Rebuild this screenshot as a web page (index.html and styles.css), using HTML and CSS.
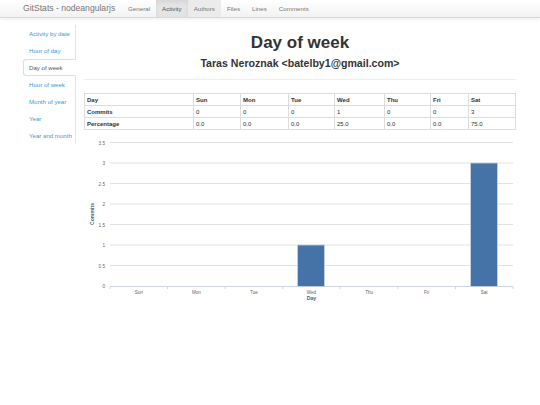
FILE: index.html
```html
<!DOCTYPE html>
<html>
<head>
<meta charset="utf-8">
<link rel="stylesheet" href="styles.css">
</head>
<body>
<div class="navbar">
  <span class="brand">GitStats - nodeangularjs</span>
  <ul class="nav">
    <li>General</li>
    <li class="active">Activity</li>
    <li class="shaded">Authors</li>
    <li>Files</li>
    <li>Lines</li>
    <li>Comments</li>
  </ul>
</div>
<div class="page">
  <ul class="side">
    <li>Activity by date</li>
    <li>Hour of day</li>
    <li class="current">Day of week</li>
    <li>Hour of week</li>
    <li>Month of year</li>
    <li>Year</li>
    <li>Year and month</li>
  </ul>
  <div class="main">
    <h1>Day of week</h1>
    <h2>Taras Neroznak &lt;batelby1@gmail.com&gt;</h2>
    <hr>
    <table class="stats">
      <tr class="head"><td class="c0">Day</td><td class="c1">Sun</td><td class="c2">Mon</td><td class="c3">Tue</td><td class="c4">Wed</td><td class="c5">Thu</td><td class="c6">Fri</td><td>Sat</td></tr>
      <tr><td class="lbl">Commits</td><td>0</td><td>0</td><td>0</td><td>1</td><td>0</td><td>0</td><td>3</td></tr>
      <tr><td class="lbl">Percentage</td><td>0.0</td><td>0.0</td><td>0.0</td><td>25.0</td><td>0.0</td><td>0.0</td><td>75.0</td></tr>
    </table>
    <svg class="chart" width="432" height="166" viewBox="0 0 432 166">
      <g class="grid">
        <line x1="26" x2="429" y1="5.5" y2="5.5"/>
        <line x1="26" x2="429" y1="26" y2="26"/>
        <line x1="26" x2="429" y1="46.5" y2="46.5"/>
        <line x1="26" x2="429" y1="67" y2="67"/>
        <line x1="26" x2="429" y1="87.5" y2="87.5"/>
        <line x1="26" x2="429" y1="108" y2="108"/>
        <line x1="26" x2="429" y1="128.5" y2="128.5"/>
      </g>
      <g class="ylab">
        <text x="21" y="7.5">3.5</text>
        <text x="21" y="28">3</text>
        <text x="21" y="48.5">2.5</text>
        <text x="21" y="69">2</text>
        <text x="21" y="89.5">1.5</text>
        <text x="21" y="110">1</text>
        <text x="21" y="130.5">0.5</text>
        <text x="21" y="151">0</text>
      </g>
      <line class="axis" x1="26" x2="429" y1="149.5" y2="149.5"/>
      <g class="ticks">
        <line x1="26" x2="26" y1="149.5" y2="152"/>
        <line x1="83.6" x2="83.6" y1="149.5" y2="152"/>
        <line x1="141.1" x2="141.1" y1="149.5" y2="152"/>
        <line x1="198.7" x2="198.7" y1="149.5" y2="152"/>
        <line x1="256.3" x2="256.3" y1="149.5" y2="152"/>
        <line x1="313.9" x2="313.9" y1="149.5" y2="152"/>
        <line x1="371.4" x2="371.4" y1="149.5" y2="152"/>
        <line x1="429" x2="429" y1="149.5" y2="152"/>
      </g>
      <rect class="bar" x="213.5" y="108" width="27" height="41.5"/>
      <rect class="bar" x="386.5" y="26" width="27" height="123.5"/>
      <g class="xlab">
        <text x="54.8" y="156.5">Sun</text>
        <text x="112.4" y="156.5">Mon</text>
        <text x="169.9" y="156.5">Tue</text>
        <text x="227.5" y="156.5">Wed</text>
        <text x="285.1" y="156.5">Thu</text>
        <text x="342.6" y="156.5">Fri</text>
        <text x="400.2" y="156.5">Sat</text>
      </g>
      <text class="title" x="227.5" y="162.5">Day</text>
      <text class="title" x="0" y="0" transform="translate(10 77) rotate(-90)">Commits</text>
    </svg>
  </div>
</div>
</body>
</html>
```
FILE: styles.css
```css
* { box-sizing: border-box; }
body {
  margin: 0;
  font-family: "Liberation Sans", Arial, sans-serif;
  color: #333;
  background: #fff;
}
.navbar {
  height: 18px;
  display: flex;
  align-items: stretch;
  background: linear-gradient(#ffffff, #f2f2f2);
  border-bottom: 1px solid #d8d8d8;
  box-shadow: 0 1px 4px rgba(0,0,0,0.08);
  padding-left: 23px;
}
.brand {
  font-size: 8.6px;
  color: #777;
  line-height: 17px;
  width: 99px;
  white-space: nowrap;
}
.nav {
  list-style: none;
  margin: 0;
  padding: 0;
  display: flex;
}
.nav li {
  font-size: 6.2px;
  color: #777;
  line-height: 17px;
  padding: 0 6px;
}
.nav li.active {
  background: #e4e4e4;
  box-shadow: inset 0 2px 4px rgba(0,0,0,0.07);
  color: #555;
}
.nav li.shaded {
  background: #ebebeb;
}
.page {
  display: flex;
  padding-left: 23px;
  padding-top: 7px;
}
.side {
  list-style: none;
  margin: 0;
  padding: 0;
  width: 53px;
  border-right: 1px solid #e4e4e4;
  height: 118px;
}
.side li {
  font-size: 6.1px;
  color: #3a9ad6;
  height: 17px;
  line-height: 17px;
  padding-left: 6px;
  white-space: nowrap;
}
.side li.current {
  color: #555;
  background: #fff;
  border: 1px solid #ddd;
  border-right-color: #fff;
  border-radius: 3px 0 0 3px;
  margin-right: -1px;
  line-height: 15px;
  padding-left: 5px;
}
.main {
  width: 432px;
  margin-left: 8px;
}
h1 {
  margin: 0;
  text-align: center;
  font-size: 17px;
  line-height: 20px;
  padding-top: 8px;
  font-weight: bold;
  color: #333;
}
h2 {
  margin: 0;
  text-align: center;
  font-size: 10.6px;
  line-height: 20px;
  font-weight: bold;
  color: #333;
}
hr {
  margin: 6px 0 0 0;
  border: 0;
  border-top: 1px solid #eee;
}
.stats {
  margin-top: 13px;
  width: 432px;
  border-collapse: collapse;
  font-size: 6px;
  color: #333;
}
.stats td {
  border: 1px solid #ddd;
  height: 12px;
  padding: 0 2px;
  line-height: 10px;
}
.stats .head td, .stats td.lbl { font-weight: bold; }
.stats .c0 { width: 109px; }
.stats .c1 { width: 47px; }
.stats .c2 { width: 48px; }
.stats .c3 { width: 46px; }
.stats .c4 { width: 50px; }
.stats .c5 { width: 46px; }
.stats .c6 { width: 38px; }
.chart {
  display: block;
  margin-top: 7px;
}
.grid line { stroke: #e2e2e2; stroke-width: 1; }
.axis { stroke: #ccd6eb; stroke-width: 1; }
.ticks line { stroke: #ccd6eb; stroke-width: 1; }
.bar { fill: #4572a7; stroke: #c8d6e8; stroke-width: 0.8; }
.ylab text { font-size: 4.6px; fill: #666; text-anchor: end; font-family: "Liberation Sans", Arial, sans-serif; }
.xlab text { font-size: 4.6px; fill: #666; text-anchor: middle; font-family: "Liberation Sans", Arial, sans-serif; }
.title { font-size: 5.2px; fill: #4d5f7f; font-weight: bold; text-anchor: middle; font-family: "Liberation Sans", Arial, sans-serif; }
```
